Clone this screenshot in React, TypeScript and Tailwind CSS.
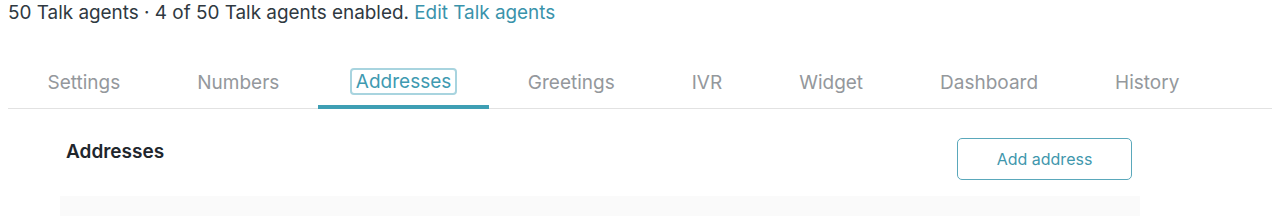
import React, { useState } from "react";

const TABS = [
  "Settings",
  "Numbers",
  "Addresses",
  "Greetings",
  "IVR",
  "Widget",
  "Dashboard",
  "History"
];

const App: React.FC = () => {
  const [active, setActive] = useState<string>("Addresses");

  return (
    <div className="w-[1272px] h-[216px] overflow-hidden bg-white font-['Inter',sans-serif]">
      <p className="pl-2 pt-[1px] text-[18.9px] leading-[24px] text-[#2f3941]">
        50 Talk agents · 4 of 50 Talk agents enabled.{" "}
        <a href="#" className="text-[#3a93ab]">
          Edit Talk agents
        </a>
      </p>

      <div className="mt-[40px] ml-2 flex border-b border-[#e2e2e2] pl-[1px]">
        {TABS.map((tab) => {
          const isActive = tab === active;
          return (
            <button
              key={tab}
              onClick={() => setActive(tab)}
              className={
                isActive
                  ? "relative px-[32.5px] pt-[3px] pb-[13px] text-[19px] leading-[23px] text-[#3f9ab1]"
                  : "relative px-[38.5px] pt-[6px] pb-[13px] text-[19px] leading-[24px] text-[#94989c]"
              }
            >
              {isActive ? (
                <span className="block rounded-[4px] border-2 border-[#a8d4df] px-[3.5px]">
                  {tab}
                </span>
              ) : (
                tab
              )}
              {isActive && (
                <span className="absolute left-0 right-0 -bottom-[1px] h-[4px] bg-[#3e9fb4]" />
              )}
            </button>
          );
        })}
      </div>

      <div className="mx-[60px] w-[1080px]">
        <div className="flex items-start justify-between pt-[29px] pl-[6px] pr-[8px]">
          <h2 className="mt-[2px] text-[19px] leading-[24px] font-semibold text-[#1f262d]">
            Addresses
          </h2>
          <button className="h-[42px] w-[175px] rounded-[5px] border border-[#5aa8bb] text-[16px] text-[#3f97ad]">
            Add address
          </button>
        </div>
        <div className="mt-[16px] h-[24px] bg-[#fafafa]" />
      </div>
    </div>
  );
};

export default App;
